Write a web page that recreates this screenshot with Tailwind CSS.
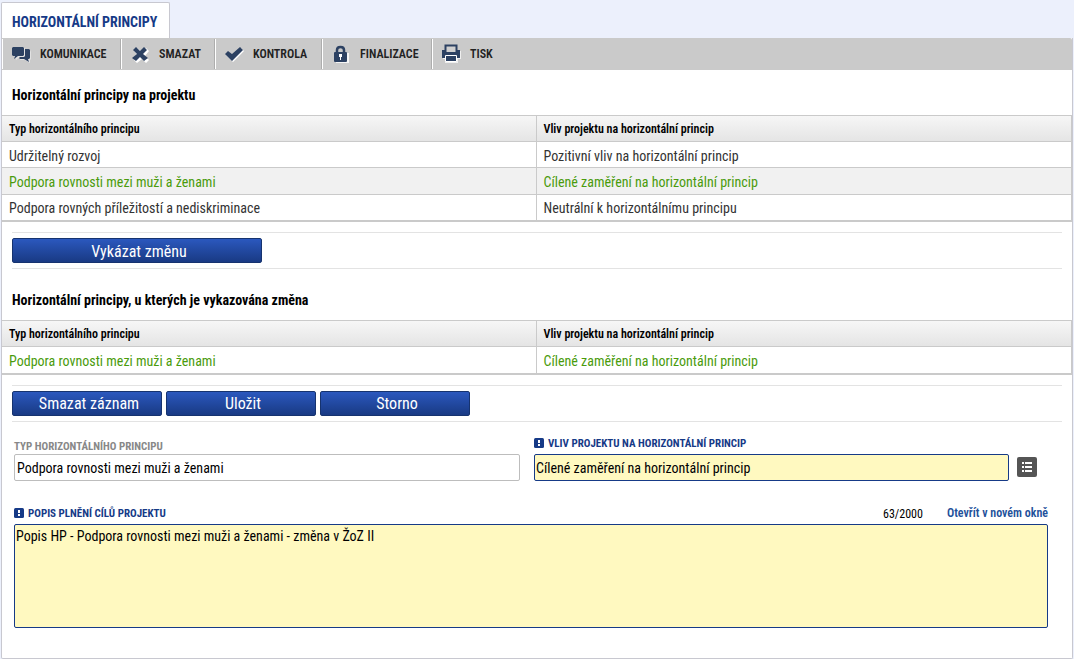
<!DOCTYPE html>
<html lang="cs">
<head>
<meta charset="utf-8">
<meta name="viewport" content="width=device-width, initial-scale=1">
<title>Horizontální principy</title>
<script src="https://cdn.jsdelivr.net/npm/@tailwindcss/browser@4"></script>
</head>
<body class="bg-[#ecf0fc] font-['Roboto_Condensed','Liberation_Sans_Narrow',Roboto,sans-serif] text-sm text-black">
<div class="mx-px flex min-h-screen flex-col pt-0.5">
  <header class="flex">
    <h1 class="flex h-9 items-center rounded-t-xs border border-b-0 border-[#c8c8d0] bg-white pt-0.5 pr-3 pl-2.5 text-[14px] font-bold text-[#163a87]">HORIZONTÁLNÍ PRINCIPY</h1>
  </header>
  <main class="flex grow flex-col rounded-b-xs border border-t-0 border-[#c8c8d0] bg-white">
    <nav aria-label="Akce" class="flex h-8 rounded-tr-xs bg-[#cacaca] py-px text-[12px] font-semibold text-[#222]">
      <button class="flex w-[119px] items-center gap-[9px] border-r border-l border-r-[#adadad] border-l-white pt-px pl-2">
        <svg class="mb-0.5 h-5 w-5" viewBox="0 0 20 20"><path fill="#fff" d="M4 4h10v2h5l1 2v7l-1 1v3l-5-3H9v-3l-4 3v-3H3z" opacity=".45"/><path fill="#2c4162" d="M2 3h10l1 1v7l-1 1H7l-4 3 1-3H2l-1-1V4z"/><path fill="#2c4162" d="M14 5h4l1 1v8l-1 1h-1l1 3-5-3H9l-1-1 1-1h4l1-1z"/></svg>KOMUNIKACE</button>
      <button class="flex w-[94px] items-center gap-[9px] border-r border-l border-r-[#adadad] border-l-white pt-px pl-2">
        <svg class="mb-0.5 h-5 w-5" viewBox="0 0 20 20"><path fill="#fff" d="m4 7 3-3 5 4 4-4 3 3-4 5 4 4-3 3-4-4-5 4-3-3 4-4z"/><path fill="#2c4162" d="m3 6 3-3 4 4 4-4 3 3-4 4 5 4-4 3-4-4-4 4-4-3 5-4z"/></svg>SMAZAT</button>
      <button class="flex w-[107px] items-center gap-[9px] border-r border-l border-r-[#adadad] border-l-white pt-px pl-2">
        <svg class="mb-0.5 h-5 w-5" viewBox="0 0 20 20"><path fill="#fff" d="m2 11 3-3 4 3 8-7 3 3L9 18z"/><path fill="#2c4162" d="m1 10 3-3 4 3 8-7 3 3L8 17z"/></svg>KONTROLA</button>
      <button class="flex w-[110px] items-center gap-[9px] border-r border-l border-r-[#adadad] border-l-white pt-px pl-2">
        <svg class="mb-0.5 h-5 w-5" viewBox="0 0 20 20"><path fill="#fff" d="M5 9h13v10H5z" opacity=".8"/><path d="M6 10V6q0-3 3.500-3T13 6v4" fill="none" stroke="#2c4162" stroke-width="2.500"/><rect x="3" y="8" width="13" height="10" rx="1" fill="#2c4162"/><path fill="#fff" d="M8 10h3v3h-1v3H9v-3H8z"/></svg>FINALIZACE</button>
      <button class="flex items-center gap-[9px] border-l border-white pt-px pl-2">
        <svg class="mb-0.5 h-5 w-5" viewBox="0 0 20 20"><path fill="#fff" d="M2 7h18v8h-3v4H4v-4H2z" opacity=".7"/><path d="M4.500 8V1.500h11V8" fill="#d0d0d0" stroke="#2c4162" stroke-width="2"/><path fill="#2c4162" d="M1 6h3v2h12V6h3v8H1z"/><path fill="#2c4162" stroke="#fff" d="M4.500 11.500h11v6h-11z"/></svg>TISK</button>
    </nav>

    <section>
      <h2 class="px-2.5 pt-[15px] pb-2.5 text-[14px] leading-5 font-bold">Horizontální principy na projektu</h2>
      <table class="w-full table-fixed border-separate border-spacing-0 border-r border-[#cacaca] text-left text-[#333]">
        <thead>
          <tr class="h-[27px] bg-linear-to-b from-[#f7f7f7] to-[#e4e4e4] text-[12px] text-black">
            <th class="w-1/2 border-y border-r border-[#cacaca] px-[7px] pt-[3px] pb-0 font-semibold">Typ horizontálního principu</th>
            <th class="border-y border-[#cacaca] px-[7px] pt-[3px] pb-0 font-semibold">Vliv projektu na horizontální princip</th>
          </tr>
        </thead>
        <tbody>
          <tr class="h-[26px]">
            <td class="border-r border-b border-[#cacaca] px-[7px] pt-0.5">Udržitelný rozvoj</td>
            <td class="border-b border-[#cacaca] px-[7px] pt-0.5">Pozitivní vliv na horizontální princip</td>
          </tr>
          <tr class="h-[27px] bg-[#f1f1f1] text-[#4a9b0c]">
            <td class="border-r border-b border-[#cacaca] px-[7px] pt-0.5">Podpora rovnosti mezi muži a ženami</td>
            <td class="border-b border-[#cacaca] px-[7px] pt-0.5">Cílené zaměření na horizontální princip</td>
          </tr>
          <tr class="h-[27px]">
            <td class="border-r border-b-2 border-[#cacaca] px-[7px]">Podpora rovných příležitostí a nediskriminace</td>
            <td class="border-b-2 border-[#cacaca] px-[7px]">Neutrální k horizontálnímu principu</td>
          </tr>
        </tbody>
      </table>
      <div class="mx-2.5 mt-2.5 flex border-y border-[#e3e3e3] py-[5px]">
        <button class="h-[25px] w-[250px] rounded-xs border border-[#16336f] bg-linear-to-b from-[#2b58be] to-[#193a84] pt-0.5 pl-1 text-[16px] leading-5 text-white">Vykázat změnu</button>
      </div>
    </section>

    <section>
      <h2 class="px-2.5 pt-[21px] pb-2.5 text-[14px] leading-5 font-bold">Horizontální principy, u kterých je vykazována změna</h2>
      <table class="w-full table-fixed border-separate border-spacing-0 border-r border-[#cacaca] text-left text-[#333]">
        <thead>
          <tr class="h-[27px] bg-linear-to-b from-[#f7f7f7] to-[#e4e4e4] text-[12px] text-black">
            <th class="w-1/2 border-y border-r border-[#cacaca] px-[7px] pt-[3px] pb-0 font-semibold">Typ horizontálního principu</th>
            <th class="border-y border-[#cacaca] px-[7px] pt-[3px] pb-0 font-semibold">Vliv projektu na horizontální princip</th>
          </tr>
        </thead>
        <tbody>
          <tr class="h-7 text-[#4a9b0c]">
            <td class="border-r border-b-2 border-[#cacaca] px-[7px] pt-0.5">Podpora rovnosti mezi muži a ženami</td>
            <td class="border-b-2 border-[#cacaca] px-[7px] pt-0.5">Cílené zaměření na horizontální princip</td>
          </tr>
        </tbody>
      </table>
      <div class="mx-2.5 mt-2.5 flex gap-1 border-y border-[#e3e3e3] py-[5px]">
        <button class="h-[25px] w-[150px] rounded-xs border border-[#16336f] bg-linear-to-b from-[#2b58be] to-[#193a84] pl-1 text-[16px] leading-5 text-white">Smazat záznam</button>
        <button class="h-[25px] w-[150px] rounded-xs border border-[#16336f] bg-linear-to-b from-[#2b58be] to-[#193a84] pl-1 text-[16px] leading-5 text-white">Uložit</button>
        <button class="h-[25px] w-[150px] rounded-xs border border-[#16336f] bg-linear-to-b from-[#2b58be] to-[#193a84] pl-1 text-[16px] leading-5 text-white">Storno</button>
      </div>
    </section>

    <form class="pr-6 pb-[30px] pl-3 pt-[15px]">
      <div class="grid grid-cols-[506fr_514fr] items-end gap-x-3.5">
        <div class="flex flex-col">
          <label for="typ" class="text-[11px] leading-3.5 font-bold text-[#888]">TYP HORIZONTÁLNÍHO PRINCIPU</label>
          <input id="typ" class="h-[27px] rounded-xs border border-[#bdbdbd] bg-white px-0.5" value="Podpora rovnosti mezi muži a ženami">
        </div>
        <div class="flex flex-col gap-[3px]">
          <label for="vliv" class="flex items-center gap-1 text-[11px] leading-3.5 font-bold text-[#163a87]">
            <svg class="mb-0.5 h-2.5 w-2.5" viewBox="0 0 10 10"><rect width="10" height="10" rx="1.500" fill="#163a87"/><path fill="#fff" d="M4 2h2v3H4zM4 6h2v2H4z"/></svg>VLIV PROJEKTU NA HORIZONTÁLNÍ PRINCIP</label>
          <div class="flex items-center gap-2 pr-[11px]">
            <input id="vliv" class="h-[27px] min-w-0 grow rounded-xs border border-[#163a87] bg-[#fff9c0] px-px" value="Cílené zaměření na horizontální princip">
            <button type="button" aria-label="Vybrat ze seznamu" class="mb-px h-5 w-5 shrink-0">
              <svg class="h-5 w-5" viewBox="0 0 20 20"><rect width="20" height="20" rx="2" fill="#555"/><path fill="#fff" d="M5 5h2v2H5zM8 5h7v2H8zM5 9h2v2H5zM8 9h7v2H8zM5 13h2v2H5zM8 13h7v2H8z"/></svg>
            </button>
          </div>
        </div>
      </div>
      <div class="mt-6 flex items-end">
        <label for="popis" class="flex grow items-center gap-1 text-[11px] leading-4 font-bold text-[#163a87]">
          <svg class="mb-0.5 h-2.5 w-2.5" viewBox="0 0 10 10"><rect width="10" height="10" rx="1.500" fill="#163a87"/><path fill="#fff" d="M4 2h2v3H4zM4 6h2v2H4z"/></svg>POPIS PLNĚNÍ CÍLŮ PROJEKTU</label>
        <span class="mr-6 pt-px text-[12px] leading-4">63/2000</span>
        <a href="#popis" class="pb-px text-[12px] leading-4 font-semibold text-[#22509a]">Otevřít v novém okně</a>
      </div>
      <textarea id="popis" class="mt-0.5 block h-[104px] w-full resize-none rounded-xs border border-[#163a87] bg-[#fff9c0] px-px py-px leading-5">Popis HP - Podpora rovnosti mezi muži a ženami - změna v ŽoZ II</textarea>
    </form>
  </main>
</div>
</body>
</html>
